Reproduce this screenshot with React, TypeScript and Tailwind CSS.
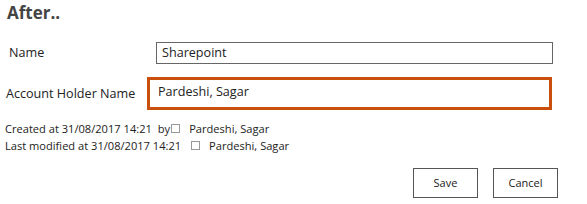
export default function App() {
  return (
    <div
      className="w-[587px] h-[204px] bg-white text-[#222] overflow-hidden"
      style={{ fontFamily: '"Open Sans", "Noto Sans", sans-serif' }}
    >
      <h2 className="pl-[7px] pt-[2px] text-[17px] leading-[22px] font-bold text-[#444]">After..</h2>

      <div className="mt-[18px] flex items-center">
        <label className="pl-[9px] w-[156px] text-[12.6px] leading-[18px] -mt-[1px]">Name</label>
        <div className="w-[397px] h-[22px] border border-[#666] flex items-center pl-[5px] text-[12.6px]">
          Sharepoint
        </div>
      </div>

      <div className="mt-[13px] flex items-center">
        <label className="pl-[6px] w-[147px] text-[12.6px] leading-[18px]">Account Holder Name</label>
        <div className="w-[405px] h-[33px] border-[3px] border-[#c8500c] flex items-center pl-[8px] pb-[3px] text-[12.6px]">
          Pardeshi, Sagar
        </div>
      </div>

      <div className="mt-[10px] pl-[5px] text-[11.1px] leading-[17px] text-[#222]">
        <div className="flex items-center">
          <span>Created at 31/08/2017 14:21</span>
          <span className="ml-[6px]">by</span>
          <span className="inline-block w-[9px] h-[9px] border border-[#999] ml-[1px]" />
          <span className="ml-[9px]">Pardeshi, Sagar</span>
        </div>
        <div className="flex items-center">
          <span>Last modified at 31/08/2017 14:21</span>
          <span className="inline-block w-[9px] h-[9px] border border-[#999] ml-[10px]" />
          <span className="ml-[9px]">Pardeshi, Sagar</span>
        </div>
      </div>

      <div className="mt-[14px] flex justify-end gap-[15px] pr-[29px]">
        <button className="w-[65px] h-[30px] border border-[#555] bg-white text-[11px] text-[#222]">Save</button>
        <button className="w-[65px] h-[30px] border border-[#555] bg-white text-[11px] text-[#222]">Cancel</button>
      </div>
    </div>
  );
}
